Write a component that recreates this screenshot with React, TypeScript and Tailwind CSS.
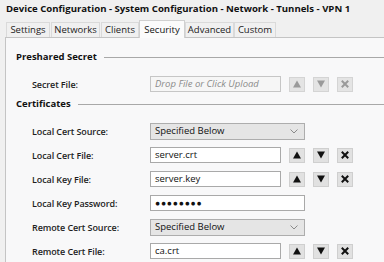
import React from "react";

const TABS = [
  { name: "Settings", cls: "w-[44px] mr-[1px]" },
  { name: "Networks", cls: "w-[49px] mr-[1px]" },
  { name: "Clients", cls: "w-[38px]" },
  { name: "Security", cls: "w-[46px]" },
  { name: "Advanced", cls: "w-[49px]" },
  { name: "Custom", cls: "w-[42px]" },
];

const ArrowBtn = ({ kind, disabled }: { kind: "up" | "down" | "del"; disabled?: boolean }) => {
  const c = disabled ? "#9a9a9a" : "#111111";
  return (
    <div
      className={`flex h-[15px] w-[16px] items-center justify-center border ${
        disabled ? "border-[#d4d4d4] bg-[#e4e4e4]" : "border-[#cfcfcf] bg-[#e1e1e1]"
      }`}
    >
      <svg width="10" height="10" viewBox="0 0 10 10">
        {kind === "up" && <polygon points="1,8.5 9,8.5 5,1.5" fill={c} />}
        {kind === "down" && <polygon points="1,1.5 9,1.5 5,8.5" fill={c} />}
        {kind === "del" && (
          <path d="M2.5 2.5 L7.5 7.5 M7.5 2.5 L2.5 7.5" stroke={c} strokeWidth="2" strokeLinecap="square" />
        )}
      </svg>
    </div>
  );
};

const Buttons = ({ disabled }: { disabled?: boolean }) => (
  <div className="ml-[8px] flex gap-[8px]">
    <ArrowBtn kind="up" disabled={disabled} />
    <ArrowBtn kind="down" disabled={disabled} />
    <ArrowBtn kind="del" disabled={disabled} />
  </div>
);

const Row = ({ label, children }: { label: string; children: React.ReactNode }) => (
  <div className="flex h-[24px] items-center pl-[16px]">
    <div className="w-[118px] text-[9px] font-semibold tracking-[-0.1px] text-[#1e1e1e]">{label}</div>
    {children}
  </div>
);

const Heading = ({ text }: { text: string }) => (
  <div className="flex h-[14px] items-center">
    <span className="font-bold text-[#111]">{text}</span>
    <div className="ml-[7px] h-px flex-1 bg-[#a8a8a8]" />
  </div>
);

const FileBox = ({ value }: { value: string }) => (
  <div className="flex h-[16px] w-[131px] items-center border border-[#a9a9a9] bg-white px-[4px] text-[#111]">
    {value}
  </div>
);

const Select = ({ value }: { value: string }) => (
  <div className="flex h-[17px] w-[155px] items-center justify-between border border-[#adadad] bg-[#e5e5e5] pl-[4px] pr-[6px] text-[#111]">
    <span>{value}</span>
    <svg width="8" height="5" viewBox="0 0 8 5">
      <polyline points="0.5,0.5 4,4 7.5,0.5" fill="none" stroke="#8a8a8a" strokeWidth="1" />
    </svg>
  </div>
);

export default function App() {
  return (
    <div
      className="h-[262px] w-[384px] overflow-hidden bg-[#f0f0f0] text-[9.5px] leading-none"
      style={{ fontFamily: '"Open Sans", "Noto Sans", sans-serif' }}
    >
      <div className="flex h-[21px] items-center pl-[6px] pb-[3px] text-[9.6px] font-bold text-[#111]">
        Device Configuration - System Configuration - Network - Tunnels - VPN 1
      </div>

      <div className="flex h-[16px] items-end pl-[6px] text-[9.5px]">
        {TABS.map((t) =>
          t.name === "Security" ? (
            <div
              key={t.name}
              className={`relative z-10 -mb-px flex h-[18px] items-center justify-center border border-b-0 border-[#d0d0d0] bg-[#fbfbfb] text-[#111] ${t.cls}`}
            >
              {t.name}
            </div>
          ) : (
            <div
              key={t.name}
              className={`flex h-[15px] items-center justify-center border border-b-0 border-[#dadada] bg-[#f0f0f0] text-[#222] ${t.cls}`}
            >
              {t.name}
            </div>
          )
        )}
      </div>

      <div className="ml-[5px] h-full border-l border-t border-[#c4c4c4] bg-[#f8f8f9] pl-[10px] pt-[12px]">
        <Heading text="Preshared Secret" />
        <div className="mt-[8px]">
          <Row label="Secret File:">
            <div className="flex h-[16px] w-[131px] items-center border border-[#c6c6c6] bg-[#f6f6f6] px-[4px] italic text-[#8a8a8a]">
              Drop File or Click Upload
            </div>
            <Buttons disabled />
          </Row>
        </div>
        <div className="mt-px">
          <Heading text="Certificates" />
        </div>
        <div className="mt-[8px]">
          <Row label="Local Cert Source:">
            <Select value="Specified Below" />
          </Row>
          <Row label="Local Cert File:">
            <FileBox value="server.crt" />
            <Buttons />
          </Row>
          <Row label="Local Key File:">
            <FileBox value="server.key" />
            <Buttons />
          </Row>
          <Row label="Local Key Password:">
            <div className="flex h-[16px] w-[155px] items-center border border-[#a9a9a9] bg-white px-[4px] text-[8.5px] tracking-[0.8px] text-[#111]">
              ●●●●●●●●
            </div>
          </Row>
          <Row label="Remote Cert Source:">
            <Select value="Specified Below" />
          </Row>
          <Row label="Remote Cert File:">
            <FileBox value="ca.crt" />
            <Buttons />
          </Row>
        </div>
      </div>
    </div>
  );
}
